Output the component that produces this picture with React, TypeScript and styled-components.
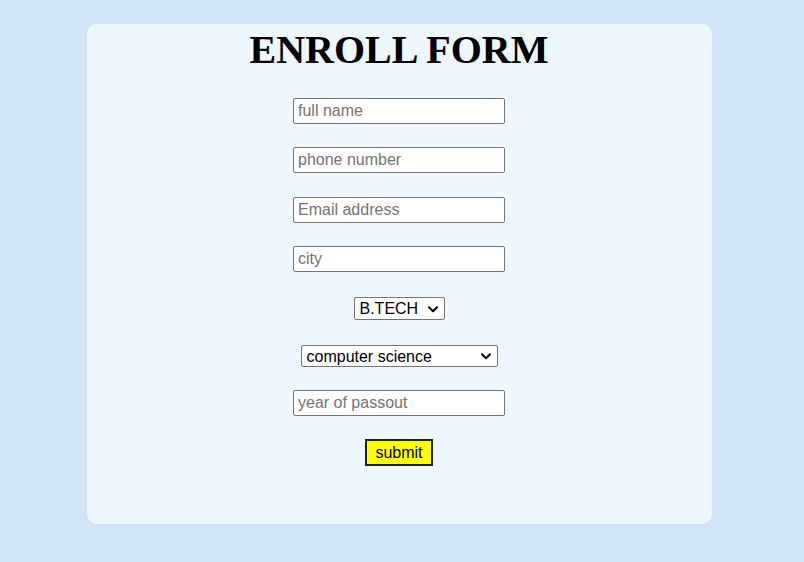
import React from "react";
import styled, { createGlobalStyle } from "styled-components";

const GlobalStyle = createGlobalStyle`
    html, body {
        margin: 0;
        padding: 0;
        background: #cfe4f7;
    }
    body {
        font-family: "Liberation Sans", Arial, sans-serif;
    }
`;

const Page = styled.div`
    width: 804px;
    height: 562px;
    box-sizing: border-box;
    padding: 24px 0 0 87px;
    background: #cfe4f7;
`;

const Card = styled.form`
    width: 625px;
    height: 500px;
    box-sizing: border-box;
    padding-right: 1px;
    background: #eef6fe;
    border-radius: 10px;
    display: flex;
    flex-direction: column;
    align-items: center;
`;

const Title = styled.h1`
    margin: 3px 0 0;
    font-family: "Liberation Serif", "Times New Roman", serif;
    font-size: 40px;
    line-height: 46px;
    font-weight: bold;
    color: #000;
`;

const Field = styled.input<{ $top: number }>`
    margin-top: ${(p) => p.$top}px;
    width: 212px;
    height: 26px;
    box-sizing: border-box;
    padding: 1px 4px;
    border: 1px solid #767676;
    border-radius: 2px;
    background: #fff;
    font-family: "Liberation Sans", Arial, sans-serif;
    font-size: 16px;
    color: #000;
    &::placeholder {
        color: #757575;
    }
`;

const SelectWrap = styled.div<{ $top: number }>`
    position: relative;
    margin-top: ${(p) => p.$top}px;
    display: flex;
`;

const Dropdown = styled.select<{ $width: number; $height: number }>`
    appearance: none;
    width: ${(p) => p.$width}px;
    height: ${(p) => p.$height}px;
    box-sizing: border-box;
    padding: 0 20px 0 5px;
    border: 1px solid #767676;
    border-radius: 2px;
    background: #fff;
    font-family: "Liberation Sans", Arial, sans-serif;
    font-size: 16px;
    color: #000;
`;

const Chevron = styled.svg`
    position: absolute;
    right: 7px;
    top: 50%;
    margin-top: -3px;
    width: 10px;
    height: 7px;
    pointer-events: none;
`;

const Submit = styled.button`
    margin-top: 23px;
    width: 68px;
    height: 27px;
    box-sizing: border-box;
    padding: 0;
    background: #ffff00;
    border: 2px solid #1f1f1f;
    font-family: "Liberation Sans", Arial, sans-serif;
    font-size: 16px;
    color: #000;
`;

function Select({
    top,
    width,
    height,
    options,
}: {
    top: number;
    width: number;
    height: number;
    options: string[];
}) {
    return (
        <SelectWrap $top={top}>
            <Dropdown $width={width} $height={height} defaultValue={options[0]}>
                {options.map((o) => (
                    <option key={o}>{o}</option>
                ))}
            </Dropdown>
            <Chevron viewBox="0 0 10 7">
                <path
                    d="M1 1.2 L5 5.2 L9 1.2"
                    fill="none"
                    stroke="#000"
                    strokeWidth="2"
                    strokeLinecap="round"
                    strokeLinejoin="round"
                />
            </Chevron>
        </SelectWrap>
    );
}

export default function App() {
    return (
        <Page>
            <GlobalStyle />
            <Card onSubmit={(e) => e.preventDefault()}>
                <Title>ENROLL FORM</Title>
                <Field $top={25} type="text" placeholder="full name" />
                <Field $top={23} type="text" placeholder="phone number" />
                <Field $top={24} type="text" placeholder="Email address" />
                <Field $top={23} type="text" placeholder="city" />
                <Select
                    top={25}
                    width={91}
                    height={23}
                    options={["B.TECH", "M.TECH", "BCA", "MCA"]}
                />
                <Select
                    top={25}
                    width={197}
                    height={22}
                    options={[
                        "computer science",
                        "information technology",
                        "electronics",
                        "mechanical",
                    ]}
                />
                <Field $top={23} type="text" placeholder="year of passout" />
                <Submit type="submit">submit</Submit>
            </Card>
        </Page>
    );
}
